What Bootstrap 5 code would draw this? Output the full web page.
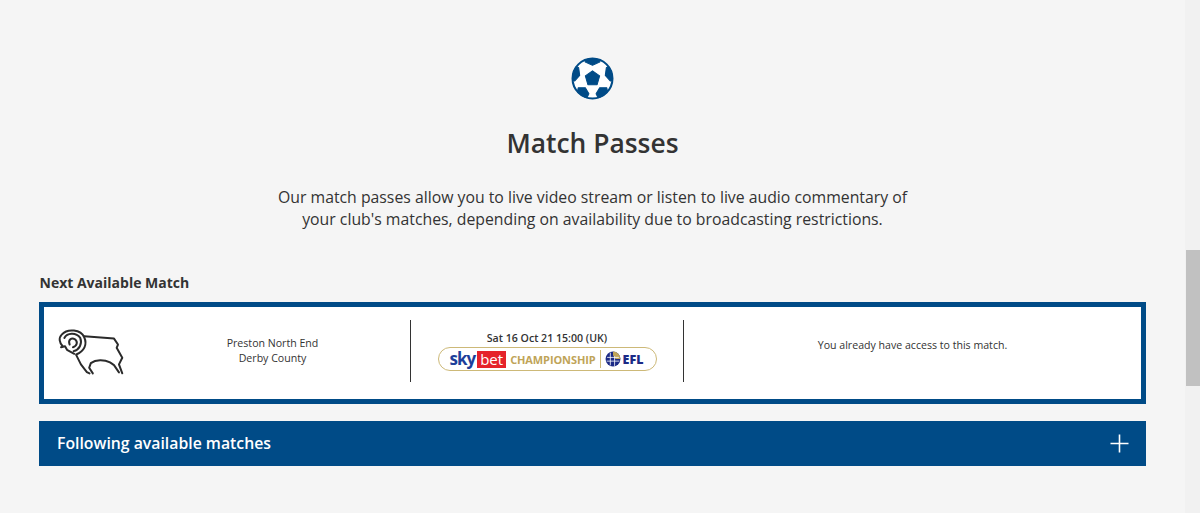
<!DOCTYPE html>
<html lang="en">

<head>
    <meta charset="UTF-8">
    <meta name="viewport" content="width=device-width, initial-scale=1.0">
    <title>Match Passes</title>
    <link href="https://cdn.jsdelivr.net/npm/bootstrap@5.3.0/dist/css/bootstrap.min.css" rel="stylesheet">
    <style>
        html, body {
            height: 513px;
            overflow: hidden;
        }

        body {
            background-color: #f5f5f5;
            color: #333;
            font-family: "Open Sans", "Liberation Sans", sans-serif;
        }

        .page-wrap {
            width: 1185px;
            padding: 57px 39px 0 39px;
        }

        .ball-icon {
            display: block;
            width: 43px;
            height: 43px;
            margin: 0 auto;
        }

        .passes-title {
            font-size: 26.4px;
            font-weight: 600;
            line-height: 36px;
            margin: 25px 0 0 0;
        }

        .passes-intro {
            font-size: 15.8px;
            line-height: 22px;
            margin: 25px 0 0 0;
        }

        .next-label {
            font-size: 14px;
            font-weight: 700;
            line-height: 20px;
            margin: 43px 0 9px 0.5px;
        }

        .match-box {
            height: 102px;
            border: 5px solid #004b87;
            background-color: #fff;
            font-size: 10.6px;
            line-height: 15px;
        }

        .club-col {
            width: 366px;
            padding-left: 13px;
        }

        .club-crest {
            display: block;
            width: 68px;
            height: 47px;
            flex: none;
            margin-top: -4px;
        }

        .club-names {
            margin-top: -4px;
            margin-left: 10px;
        }

        .date-col {
            width: 274px;
            height: 62px;
            margin-top: -4px;
            padding-top: 11px;
            border-left: 1px solid #333;
            border-right: 1px solid #333;
        }

        .date-text {
            font-weight: 600;
            line-height: 14px;
        }

        .access-col {
            margin-top: -15px;
        }

        .comp-logo {
            width: 219px;
            height: 24px;
            margin-top: 2px;
            padding: 0 8px 0 11px;
            border: 1.5px solid #cdb978;
            border-radius: 12px;
            background-color: #fff;
        }

        .logo-sky {
            font-size: 17px;
            font-weight: 700;
            letter-spacing: -1px;
            color: #1d3f9a;
            line-height: 20px;
        }

        .logo-bet {
            background-color: #e5232b;
            color: #fff;
            font-size: 15px;
            line-height: 17px;
            height: 17px;
            padding: 0 3px;
            margin: 0 4px 0 2px;
        }

        .logo-champ {
            color: #c0a458;
            font-size: 11px;
            font-weight: 700;
            letter-spacing: -.1px;
        }

        .logo-rule {
            width: 1px;
            height: 18px;
            background-color: #cdb978;
            margin: 0 4px 0 4px;
        }

        .logo-ball {
            display: block;
            width: 16px;
            height: 16px;
            margin-right: 2px;
        }

        .logo-efl {
            color: #1b2a86;
            font-size: 12.5px;
            font-weight: 800;
        }

        .more-bar {
            height: 45px;
            margin-top: 17px;
            padding: 1px 17px 0 18px;
            background-color: #004b87;
            color: #fff;
            font-size: 15.8px;
            font-weight: 600;
        }

        .plus-icon {
            display: block;
            width: 19px;
            height: 19px;
            margin-top: -1px;
        }

        .fake-scroll {
            position: absolute;
            top: 0;
            right: 0;
            width: 15px;
            height: 513px;
            background-color: #f1f1f1;
        }

        .fake-thumb {
            position: absolute;
            top: 250px;
            left: 1px;
            width: 14px;
            height: 136px;
            background-color: #c1c1c1;
        }
    </style>
</head>

<body>

    <div class="page-wrap">
        <div class="text-center">
            <svg class="ball-icon" viewBox="0 0 84 84">
                <defs>
                    <clipPath id="ball-clip"><circle cx="42" cy="42" r="40"></circle></clipPath>
                </defs>
                <circle cx="42" cy="42" r="40" fill="#fff"></circle>
                <g clip-path="url(#ball-clip)" fill="#004b87" stroke="#004b87" stroke-width="2" stroke-linejoin="round">
                    <polygon points="42,27 56,37 51,54 33,54 28,37"></polygon>
                    <polygon points="26,0 58,0 56,10 42,16 28,10"></polygon>
                    <polygon points="7,17 15,21 17,36 7,47 0,43 0,24"></polygon>
                    <polygon points="77,17 69,21 67,36 77,47 84,43 84,24"></polygon>
                    <polygon points="14,60 28,60 35,72 29,84 11,77"></polygon>
                    <polygon points="70,60 56,60 49,72 55,84 73,77"></polygon>
                </g>
                <circle cx="42" cy="42" r="39" fill="none" stroke="#004b87" stroke-width="4"></circle>
            </svg>
            <h1 class="passes-title">Match Passes</h1>
            <p class="passes-intro">Our match passes allow you to live video stream or listen to live audio commentary of<br>your club's matches, depending on availability due to broadcasting restrictions.</p>
        </div>

        <div class="next-label">Next Available Match</div>

        <!-- Next match -->
        <div class="match-box d-flex align-items-center">
            <div class="club-col d-flex align-items-center">
                <svg class="club-crest" viewBox="78 100 205 142" fill="none" stroke="#2b2b2b" stroke-width="6" stroke-linecap="round" stroke-linejoin="round">
                    <path d="M160 125 L250 132 L262 150 L258 160 L275 190 L265 210 L275 237"></path>
                    <path d="M265 234 L250 212 L238 204 C220 195 195 195 180 206 L175 220 L186 237"></path>
                    <path d="M176 237 L168 233 L150 210 L136 182"></path>
                    <path d="M136 180 C160 170 170 150 160 128 C150 105 110 100 92 120 C82 130 85 145 95 155"></path>
                    <path d="M100 130 C108 115 135 112 148 130 C155 148 145 165 128 170"></path>
                    <path d="M116 150 C110 135 122 128 132 134 C142 142 138 155 126 158"></path>
                    <path d="M90 158 L102 155 L108 166 L130 178"></path>
                </svg>
                <div class="club-names flex-grow-1 text-center">Preston North End<br>Derby County</div>
            </div>
            <div class="date-col d-flex flex-column align-items-center">
                <div class="date-text">Sat 16 Oct 21 15:00 (UK)</div>
                <div class="comp-logo d-flex align-items-center">
                    <span class="logo-sky">sky</span>
                    <span class="logo-bet">bet</span>
                    <span class="logo-champ">CHAMPIONSHIP</span>
                    <span class="logo-rule"></span>
                    <svg class="logo-ball" viewBox="0 0 30 30">
                        <circle cx="15" cy="15" r="14" fill="#1b2a86"></circle>
                        <path d="M15 1 A14 14 0 0 1 29 15 L20 15 L15 8 Z" fill="#c0a458"></path>
                        <path d="M4 12 H26 M3 19 H27 M10 3 V27 M18 10 V28" stroke="#fff" stroke-width="1.5"></path>
                    </svg>
                    <span class="logo-efl">EFL</span>
                </div>
            </div>
            <div class="access-col flex-grow-1 text-center">You already have access to this match.</div>
        </div>

        <!-- Following matches -->
        <div class="more-bar d-flex align-items-center justify-content-between">
            <span>Following available matches</span>
            <svg class="plus-icon" viewBox="0 0 19 19" stroke="#fff" stroke-width="1.6">
                <path d="M0.5 9.5 H18.5 M9.5 0.5 V18.5"></path>
            </svg>
        </div>
    </div>

    <div class="fake-scroll"><div class="fake-thumb"></div></div>

    <script src="https://cdn.jsdelivr.net/npm/bootstrap@5.3.0/dist/js/bootstrap.bundle.min.js"></script>
</body>

</html>
